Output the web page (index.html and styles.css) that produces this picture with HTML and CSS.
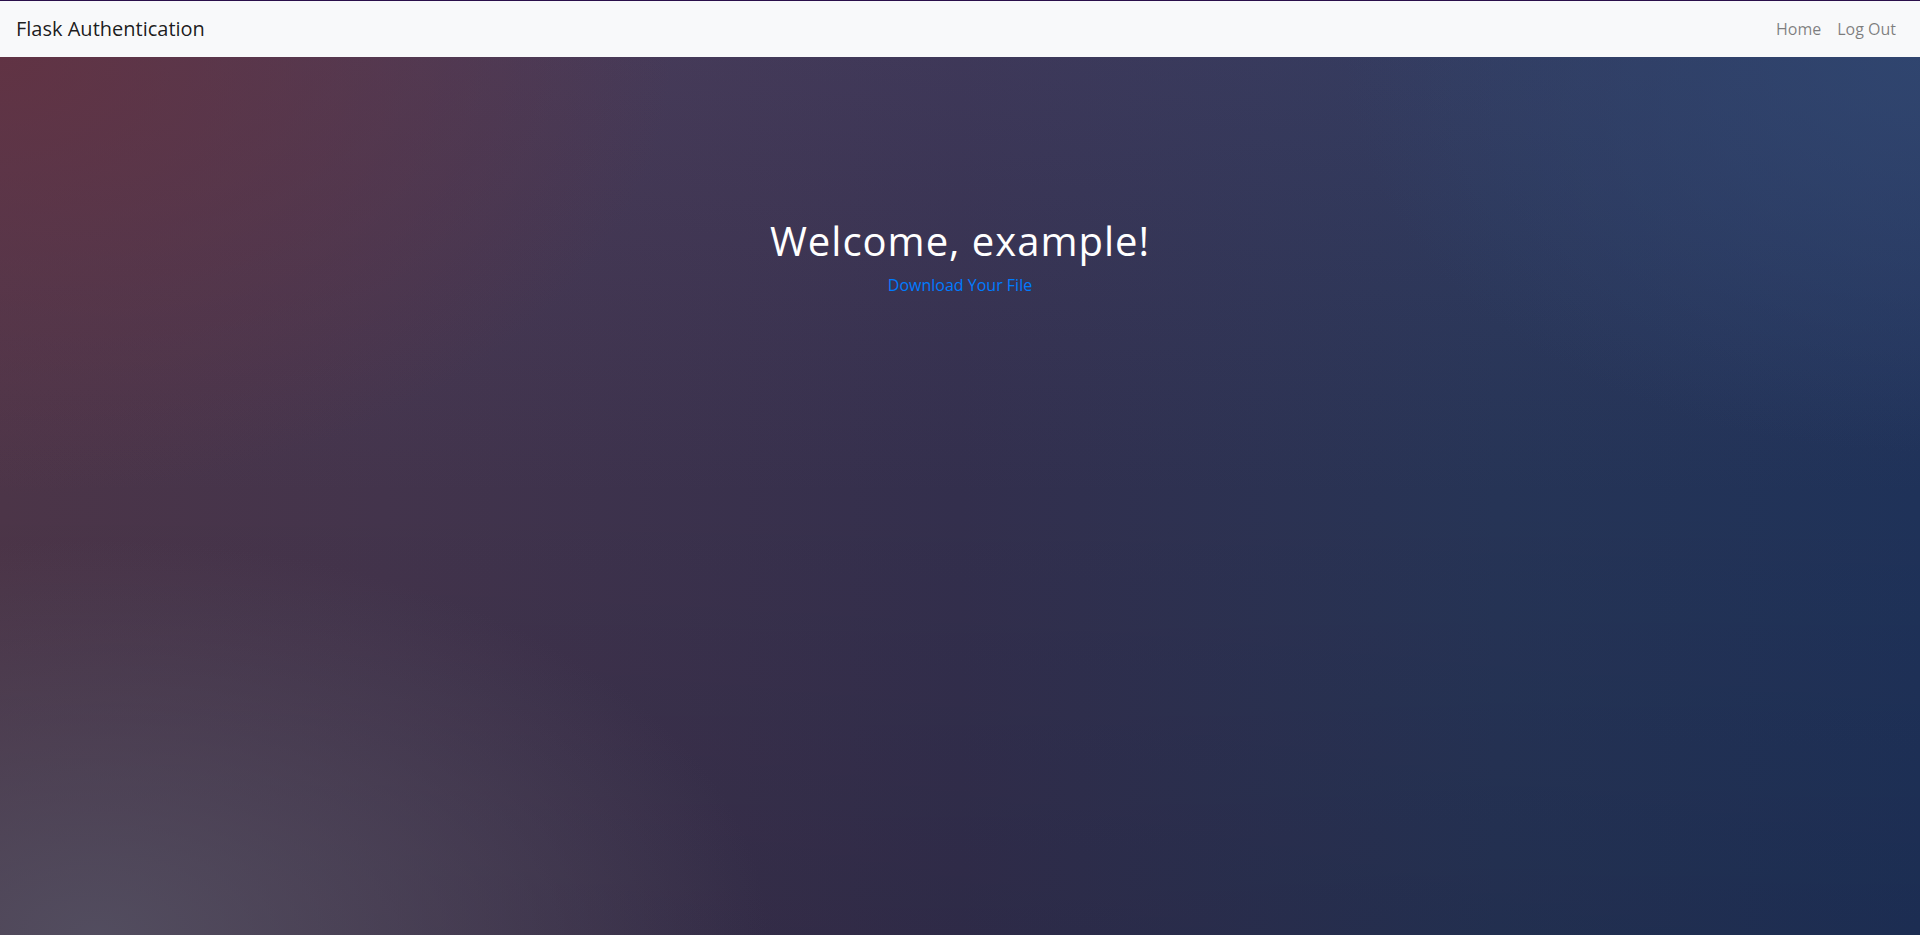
FILE: index.html
```html
<!DOCTYPE html>
<html lang="en">
<head>
<meta charset="utf-8">
<title>Flask Authentication</title>
<link rel="stylesheet" href="styles.css">
</head>
<body>
<nav class="navbar">
  <a class="brand" href="#">Flask Authentication</a>
  <ul class="nav-links">
    <li><a class="nav-link" href="#">Home</a></li>
    <li><a class="nav-link" href="#">Log Out</a></li>
  </ul>
</nav>
<main class="hero">
  <h1 class="title">Welcome, example!</h1>
  <a class="download" href="#">Download Your File</a>
</main>
</body>
</html>
```
FILE: styles.css
```css
* { box-sizing: border-box; }
html, body { margin: 0; height: 100%; }
body {
  font-family: "Open Sans", "Noto Sans", sans-serif;
  font-size: 16px;
  line-height: 1.5;
  color: #212529;
  display: flex;
  flex-direction: column;
  min-height: 935px;
}
.navbar {
  display: flex;
  align-items: center;
  justify-content: space-between;
  padding: 8px 16px;
  background: #f8f9fa;
  border-top: 1px solid #2a0f4a;
  flex: none;
}
.brand {
  font-size: 20px;
  line-height: 30px;
  padding: 5px 0;
  color: rgba(0,0,0,.9);
  text-decoration: none;
}
.nav-links {
  display: flex;
  list-style: none;
  margin: 0;
  padding: 0;
}
.nav-link {
  display: block;
  padding: 8px;
  color: rgba(0,0,0,.5);
  text-decoration: none;
}
.hero {
  flex: 1;
  display: flex;
  flex-direction: column;
  align-items: center;
  padding-top: 160px;
  background:
    radial-gradient(ellipse 35% 45% at 5% 100%, rgba(84,80,98,.9) 0%, rgba(84,80,98,0) 100%),
    radial-gradient(ellipse 35% 50% at 0% 0%, rgba(98,50,66,.9) 0%, rgba(98,50,66,0) 100%),
    radial-gradient(ellipse 30% 45% at 100% 0%, rgba(48,70,112,.9) 0%, rgba(48,70,112,0) 100%),
    linear-gradient(to bottom, rgba(130,110,160,.14) 0%, rgba(0,0,0,0) 50%, rgba(0,0,20,.1) 100%),
    linear-gradient(to right, #4c3548 0%, #43344c 20%, #332f4d 50%, #263456 78%, #1f3259 100%);
}
.title {
  margin: 0 0 8px;
  font-size: 40px;
  line-height: 1.2;
  font-weight: 400;
  letter-spacing: 1px;
  color: #fff;
}
.download {
  color: #007bff;
  text-decoration: none;
}
```
